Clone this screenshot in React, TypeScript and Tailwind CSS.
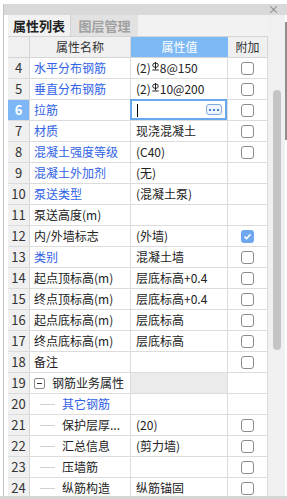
import React from 'react'

type Row = {
  no: number
  name: string
  value?: string
  blue?: boolean
  check?: 'off' | 'on'
  level?: 'group' | 'child'
  rebar?: [string, string]
  editing?: boolean
}

const rows: Row[] = [
  { no: 4, name: '水平分布钢筋', blue: true, rebar: ['(2)', '8@150'], check: 'off' },
  { no: 5, name: '垂直分布钢筋', blue: true, rebar: ['(2)', '10@200'], check: 'off' },
  { no: 6, name: '拉筋', blue: true, editing: true, check: 'off' },
  { no: 7, name: '材质', blue: true, value: '现浇混凝土', check: 'off' },
  { no: 8, name: '混凝土强度等级', blue: true, value: '(C40)', check: 'off' },
  { no: 9, name: '混凝土外加剂', blue: true, value: '(无)' },
  { no: 10, name: '泵送类型', blue: true, value: '(混凝土泵)' },
  { no: 11, name: '泵送高度(m)' },
  { no: 12, name: '内/外墙标志', value: '(外墙)', check: 'on' },
  { no: 13, name: '类别', blue: true, value: '混凝土墙', check: 'off' },
  { no: 14, name: '起点顶标高(m)', value: '层底标高+0.4', check: 'off' },
  { no: 15, name: '终点顶标高(m)', value: '层底标高+0.4', check: 'off' },
  { no: 16, name: '起点底标高(m)', value: '层底标高', check: 'off' },
  { no: 17, name: '终点底标高(m)', value: '层底标高', check: 'off' },
  { no: 18, name: '备注', check: 'off' },
  { no: 19, name: '钢筋业务属性', level: 'group' },
  { no: 20, name: '其它钢筋', blue: true, level: 'child' },
  { no: 21, name: '保护层厚...', value: '(20)', level: 'child', check: 'off' },
  { no: 22, name: '汇总信息', value: '(剪力墙)', level: 'child', check: 'off' },
  { no: 23, name: '压墙筋', level: 'child', check: 'off' },
  { no: 24, name: '纵筋构造', value: '纵筋锚固', level: 'child', check: 'off' },
]

function RebarMark() {
  return (
    <svg width="7" height="9" viewBox="0 0 7 9" className="inline-block relative -top-[3px] mx-[1px]">
      <ellipse cx="3.5" cy="3.2" rx="2.8" ry="2.2" fill="none" stroke="#222" strokeWidth="1" />
      <line x1="3.5" y1="0" x2="3.5" y2="7.5" stroke="#222" strokeWidth="1" />
      <line x1="0.3" y1="8" x2="6.7" y2="8" stroke="#222" strokeWidth="1" />
    </svg>
  )
}

function CheckBox({ on }: { on: boolean }) {
  if (on) {
    return (
      <div className="w-[13px] h-[13px] rounded-[3px] bg-[#6ea7f0] flex items-center justify-center">
        <svg width="9" height="9" viewBox="0 0 9 9">
          <path d="M1.5 4.6 L3.6 6.6 L7.6 2.2" fill="none" stroke="#fff" strokeWidth="1.6" />
        </svg>
      </div>
    )
  }
  return <div className="w-[13px] h-[13px] rounded-[3px] border border-[#8c8c8c] bg-white" />
}

function NameCell({ row }: { row: Row }) {
  const color = row.blue ? 'text-[#2f62e6]' : 'text-[#222]'
  if (row.level === 'group') {
    return (
      <div className="flex items-center pl-[4px]">
        <div className="w-[11px] h-[11px] border border-[#8a8a8a] rounded-[2px] flex items-center justify-center">
          <div className="w-[5px] h-px bg-[#333]" />
        </div>
        <span className="ml-[7px] text-[#222]">{row.name}</span>
      </div>
    )
  }
  if (row.level === 'child') {
    return (
      <div className="flex items-center pl-[10px]">
        <div className="w-[15px] h-px bg-[#d0d0d0]" />
        <span className={`ml-[7px] whitespace-nowrap ${color}`}>{row.name}</span>
      </div>
    )
  }
  return <div className={`pl-[4px] whitespace-nowrap ${color}`}>{row.name}</div>
}

function GridRow({ row }: { row: Row }) {
  return (
    <div className="flex h-[21px] border-b border-[#dcdcdc] shrink-0">
      <div
        className={`w-[22px] border-r border-[#d6d6d6] flex items-center justify-center text-[13px] ${
          row.editing ? 'bg-[#7db7f5] text-white font-bold' : 'bg-[#f0f0f0] text-[#333]'
        }`}
      >
        {row.no}
      </div>
      <div className="w-[101px] border-r border-[#dcdcdc] flex items-center overflow-hidden">
        <NameCell row={row} />
      </div>
      <div
        className={`w-[97px] border-r border-[#dcdcdc] flex items-center pl-[5px] relative whitespace-nowrap text-[#222] ${
          row.level === 'group' ? 'bg-[#ebebeb]' : ''
        }`}
      >
        {row.rebar && (
          <span>
            {row.rebar[0]}
            <RebarMark />
            {row.rebar[1]}
          </span>
        )}
        {row.value}
        {row.editing && (
          <div className="absolute -top-px -left-px right-0 bottom-0 border-2 border-[#6aa8ee] bg-white">
            <div className="absolute left-[5px] top-[3px] w-px h-[13px] bg-black" />
            <div className="absolute right-[3px] top-[3px] w-[16px] h-[11px] rounded-[3px] border border-[#7fa9dd] bg-[#eef4fc] flex items-center justify-center gap-[2px]">
              <div className="w-[2px] h-[2px] bg-[#4a7fc8]" />
              <div className="w-[2px] h-[2px] bg-[#4a7fc8]" />
              <div className="w-[2px] h-[2px] bg-[#4a7fc8]" />
            </div>
          </div>
        )}
      </div>
      <div className="w-[40px] border-r border-[#dcdcdc] flex items-center justify-center">
        {row.check && <CheckBox on={row.check === 'on'} />}
      </div>
    </div>
  )
}

export default function App() {
  return (
    <div className="w-[287px] h-[499px] bg-white overflow-hidden flex flex-col font-['Noto_Sans_CJK_SC',sans-serif] text-[12px]">
      <div className="h-[496px] flex pt-[4px] pl-[3px]">
        <div className="flex-1 border-l border-[#c4c4c4] flex flex-col">
          <div className="h-[11px] bg-[#d9d9d9] flex items-center justify-end pr-[8px] text-[11px] leading-[11px] text-[#7a7a7a]">
            ×
          </div>
          <div className="flex flex-1 min-h-0">
            <div className="w-[4px]" />
            <div className="w-[260px] flex flex-col overflow-hidden">
              <div className="h-[22px] shrink-0 flex bg-[#f2f2f2] border-b border-[#d4d4d4]">
                <div className="w-[62px] flex items-center justify-center text-[13px] font-bold text-[#222]">
                  属性列表
                </div>
                <div className="w-[68px] flex items-center justify-center text-[13px] font-bold text-[#a0a0a0] bg-[#e2e2e2] border-l border-[#d4d4d4]">
                  图层管理
                </div>
              </div>
              <div className="h-[21px] shrink-0 flex border-b border-[#d6d6d6] bg-[#f0f0f0]">
                <div className="w-[22px] border-r border-[#d6d6d6]" />
                <div className="w-[101px] border-r border-[#d6d6d6] flex items-center justify-center text-[#333]">
                  属性名称
                </div>
                <div className="w-[97px] flex items-center justify-center text-white bg-[#7db9f5]">
                  属性值
                </div>
                <div className="w-[40px] border-r border-[#d6d6d6] flex items-center justify-center text-[#333]">
                  附加
                </div>
              </div>
              {rows.map((r) => (
                <GridRow key={r.no} row={r} />
              ))}
            </div>
            <div className="w-[17px] bg-[#f0f0f0] relative">
              <div className="absolute left-[5px] top-[75px] w-[8px] h-[260px] rounded-full bg-[#c4c4c4]" />
            </div>
            <div className="w-[2px] pt-[7px]">
              <div className="h-[118px] bg-[#8e8e8e]" />
            </div>
          </div>
        </div>
      </div>
      <div className="h-[3px] bg-[#d6d6d6]" />
    </div>
  )
}
